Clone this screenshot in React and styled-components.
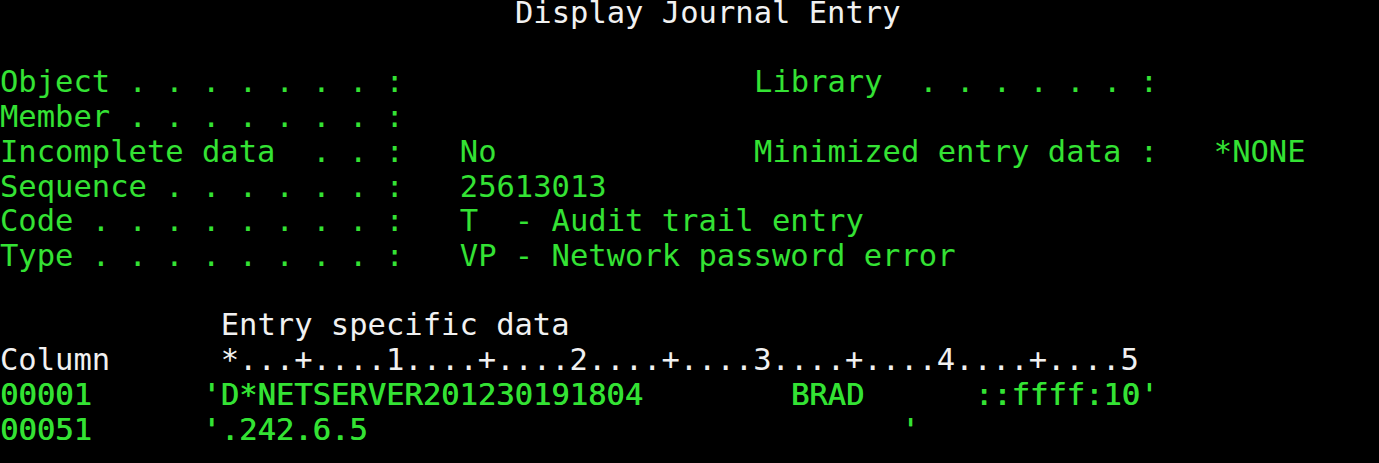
import React from "react";
import styled, { createGlobalStyle } from "styled-components";

const CELL = 18.4;
const LINE = 34.72;

const GlobalStyle = createGlobalStyle`
  html, body {
    margin: 0;
    padding: 0;
    background: #000;
  }
`;

const Screen = styled.div`
  width: 1379px;
  height: 463px;
  overflow: hidden;
  background: #000;
  font-family: "DejaVu Sans Mono", "Liberation Mono", monospace;
  font-size: 30.5px;
`;

const Lines = styled.div`
  display: flex;
  flex-direction: column;
  margin-top: -4px;
`;

const Row = styled.div`
  display: grid;
  grid-template-columns: repeat(80, ${CELL}px);
  height: ${LINE}px;
  line-height: ${LINE}px;
  white-space: pre;
`;

const Field = styled.span`
  grid-column: ${(p) => p.$col + 1} / span ${(p) => p.$len};
  color: ${(p) => (p.$tone === "white" ? "#f1f1f1" : "#34e234")};
  text-shadow: ${(p) => (p.$heavy ? "0.6px 0 0 currentColor" : "none")};
`;

const green = (col, text, heavy) => ({ col, text, tone: "green", heavy });
const white = (col, text) => ({ col, text, tone: "white" });

const screen = [
  [white(28, "Display Journal Entry")],
  [],
  [green(0, "Object . . . . . . . :"), green(41, "Library  . . . . . . :")],
  [green(0, "Member . . . . . . . :")],
  [
    green(0, "Incomplete data  . . :"),
    green(25, "No"),
    green(41, "Minimized entry data :"),
    green(66, "*NONE"),
  ],
  [green(0, "Sequence . . . . . . :"), green(25, "25613013")],
  [green(0, "Code . . . . . . . . :"), green(25, "T  - Audit trail entry")],
  [green(0, "Type . . . . . . . . :"), green(25, "VP - Network password error")],
  [],
  [white(12, "Entry specific data")],
  [
    white(0, "Column"),
    white(12, "*...+....1....+....2....+....3....+....4....+....5"),
  ],
  [
    green(0, "00001", true),
    green(11, "'D*NETSERVER201230191804", true),
    green(43, "BRAD", true),
    green(53, "::ffff:10'", true),
  ],
  [green(0, "00051", true), green(11, "'.242.6.5", true), green(49, "'", true)],
];

export default function App() {
  return (
    <>
      <GlobalStyle />
      <Screen>
        <Lines>
          {screen.map((fields, r) => (
            <Row key={r}>
              {fields.map((f) => (
                <Field
                  key={f.col}
                  $col={f.col}
                  $len={f.text.length}
                  $tone={f.tone}
                  $heavy={f.heavy}
                >
                  {f.text}
                </Field>
              ))}
            </Row>
          ))}
        </Lines>
      </Screen>
    </>
  );
}
